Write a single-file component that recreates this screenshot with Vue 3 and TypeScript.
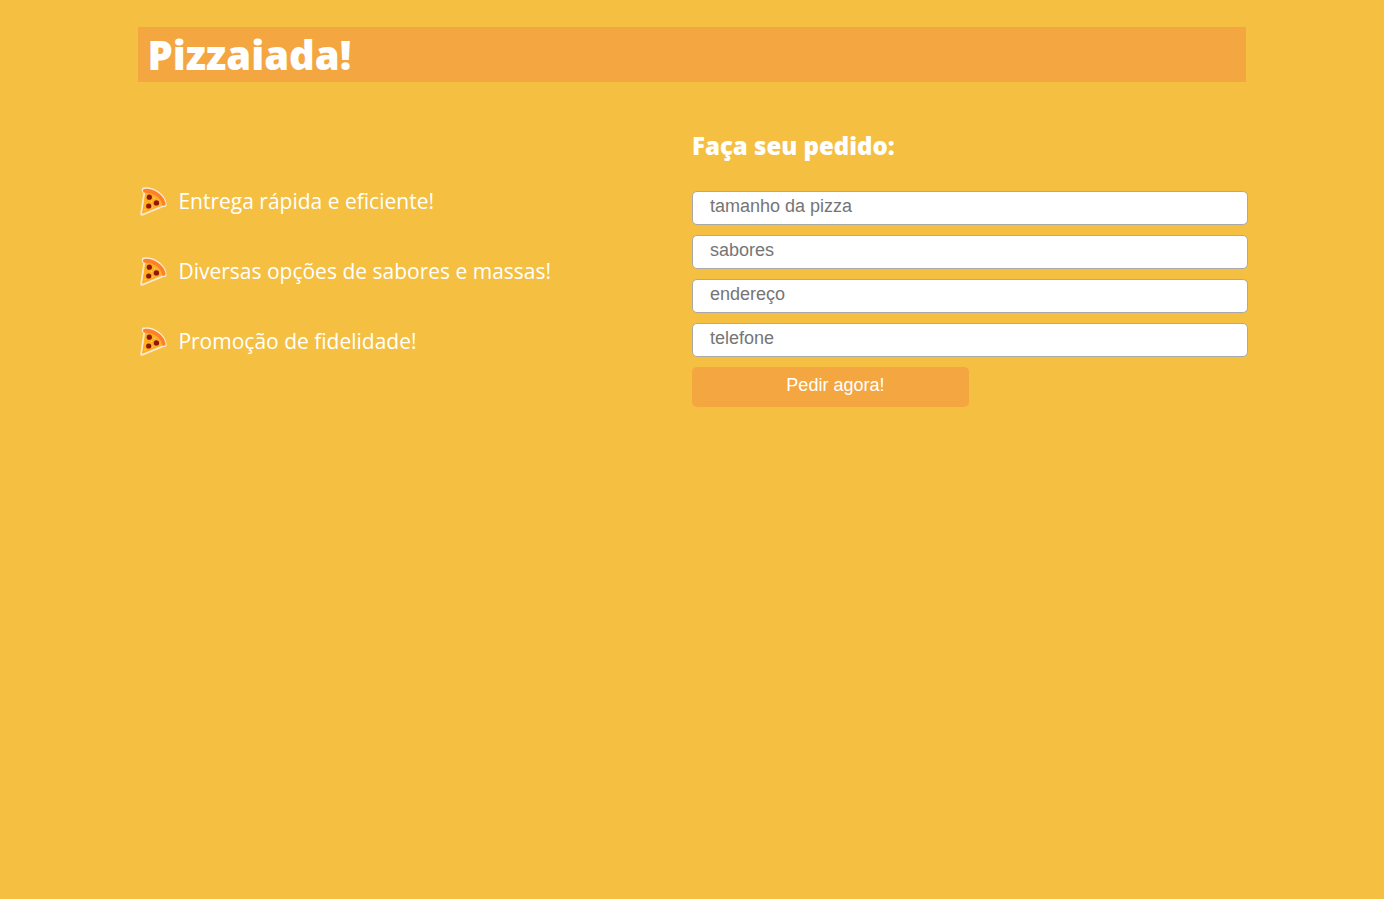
<script setup lang="ts">
import { reactive } from 'vue'

interface Field {
  id: string
  label: string
  type: string
}

const benefits: string[] = [
  'Entrega rápida e eficiente!',
  'Diversas opções de sabores e massas!',
  'Promoção de fidelidade!',
]

const fields: Field[] = [
  { id: 'tamanho', label: 'tamanho da pizza', type: 'text' },
  { id: 'sabores', label: 'sabores', type: 'text' },
  { id: 'endereco', label: 'endereço', type: 'text' },
  { id: 'telefone', label: 'telefone', type: 'tel' },
]

const order = reactive<Record<string, string>>({
  tamanho: '',
  sabores: '',
  endereco: '',
  telefone: '',
})
</script>

<template>
  <div class="page">
    <header class="banner">
      <h1>Pizzaiada!</h1>
    </header>
    <main class="columns">
      <ul class="benefits">
        <li v-for="benefit in benefits" :key="benefit">
          <svg class="slice" viewBox="0 0 30 30" aria-hidden="true">
            <path d="M5.500 2.300 C16 1 26.500 9 27.800 18.300 Q27.800 20.300 25.800 20 L4 28.800 Q3 29 3.200 27.500 L6.200 7 Q3.500 4 5.500 2.300Z" fill="#ffb636" stroke="#fbe9d3" stroke-width="1.800" stroke-linejoin="round" />
            <path d="M7.500 7 C15 6.500 21.500 11.500 23 19 L4.300 27.600Z" fill="#ffad22" />
            <path d="M6.900 4.800 C15.500 4.300 24 10.300 25.700 17.800" fill="none" stroke="#ff8127" stroke-width="3.800" stroke-linecap="round" />
            <g fill="#8f1808">
              <circle cx="11.300" cy="11.200" r="2.600" />
              <circle cx="18.400" cy="16.900" r="2.700" />
              <circle cx="10.700" cy="20" r="2.600" />
            </g>
            <g fill="#ffd879">
              <circle cx="16.500" cy="12.200" r=".7" />
              <circle cx="13.500" cy="15.600" r=".8" />
              <circle cx="7.300" cy="23.700" r=".8" />
              <circle cx="14.500" cy="20.800" r=".6" />
            </g>
          </svg>
          <span>{{ benefit }}</span>
        </li>
      </ul>
      <form class="order" @submit.prevent>
        <h2>Faça seu pedido:</h2>
        <input
          v-for="field in fields"
          :id="field.id"
          :key="field.id"
          v-model="order[field.id]"
          :type="field.type"
          :aria-label="field.label"
          :placeholder="field.label"
        />
        <button type="submit">Pedir agora!</button>
      </form>
    </main>
  </div>
</template>

<style>
body {
  background: #f5bf42;
}
</style>

<style scoped>
.page {
  width: 80%;
  margin: 0 auto;
  padding-top: 27px;
  color: #fff;
  font-family: "Open Sans", sans-serif;
}

.banner {
  padding: 0 9px;
  background: #f4a641;
}

h1 {
  margin: 0;
  font-size: 40px;
  font-weight: 800;
  line-height: 55px;
}

.columns {
  display: grid;
  grid-template-columns: 1fr 1fr;
  padding-top: 48px;
}

.benefits {
  margin: 0;
  padding: 36px 0 0;
  list-style: none;
}

.benefits li {
  display: flex;
  align-items: center;
  gap: 10px;
  height: 70px;
  font-size: 21px;
  font-weight: 400;
}

.slice {
  width: 30px;
  height: 30px;
}

.order {
  display: flex;
  flex-direction: column;
  align-items: flex-start;
  gap: 10px;
}

h2 {
  margin: 0 0 20px;
  font-size: 24px;
  font-weight: 800;
  line-height: 31px;
}

input {
  box-sizing: content-box;
  width: calc(100% - 32px);
  height: 22px;
  margin: 0;
  padding: 3px 15px 7px 17px;
  border: 1px solid #a9a9a9;
  border-radius: 5px;
  background: #fff;
  color: #333;
  font-family: "Liberation Sans", Arial, sans-serif;
  font-size: 18px;
}

input::placeholder {
  color: #757575;
}

button {
  width: 50%;
  height: 40px;
  padding: 0 0 4px 10px;
  border: 0;
  border-radius: 5px;
  background: #f4a641;
  color: #fff;
  font-family: "Liberation Sans", Arial, sans-serif;
  font-size: 18px;
  cursor: pointer;
}
</style>
